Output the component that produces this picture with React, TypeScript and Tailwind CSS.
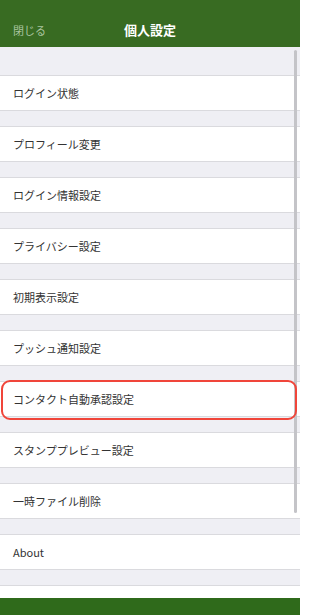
import React from "react";

const items = [
  "ログイン状態",
  "プロフィール変更",
  "ログイン情報設定",
  "プライバシー設定",
  "初期表示設定",
  "プッシュ通知設定",
  "コンタクト自動承認設定",
  "スタンププレビュー設定",
  "一時ファイル削除",
  "About",
];

export default function App() {
  return (
    <div
      className="relative w-[300px] h-[615px] flex flex-col bg-[#efeff4] overflow-hidden"
      style={{ fontFamily: '"Noto Sans CJK JP", "Noto Sans", sans-serif' }}
    >
      <header className="h-[47px] shrink-0 bg-[#386b22] relative flex items-center justify-center pt-[13px]">
        <span className="absolute left-[13px] top-[22px] text-[11px] leading-[16px] text-[#a9c49f]">閉じる</span>
        <span className="text-[13px] font-bold text-white leading-[18px]">個人設定</span>
      </header>
      <div className="flex-1 flex flex-col">
        <div className="h-[28px] shrink-0" />
        {items.map((t) => (
          <div key={t} className="shrink-0">
            <div className="h-[36px] bg-white border-y border-[#dadade] flex items-center px-[13px] text-[11px] text-[#333333]">
              {t}
            </div>
            <div className="h-[15px]" />
          </div>
        ))}
        <div className="flex-1 bg-white border-t border-[#dadade]" />
      </div>
      <footer className="h-[17px] shrink-0 bg-[#2f6a1b]" />
      <div className="absolute right-[3px] top-[50px] w-[3px] h-[463px] rounded-full bg-[#c4c4c8]" />
      <div className="absolute left-[1px] top-[380px] w-[296px] h-[40px] border-2 border-[#f0453a] rounded-[9px]" />
    </div>
  );
}
